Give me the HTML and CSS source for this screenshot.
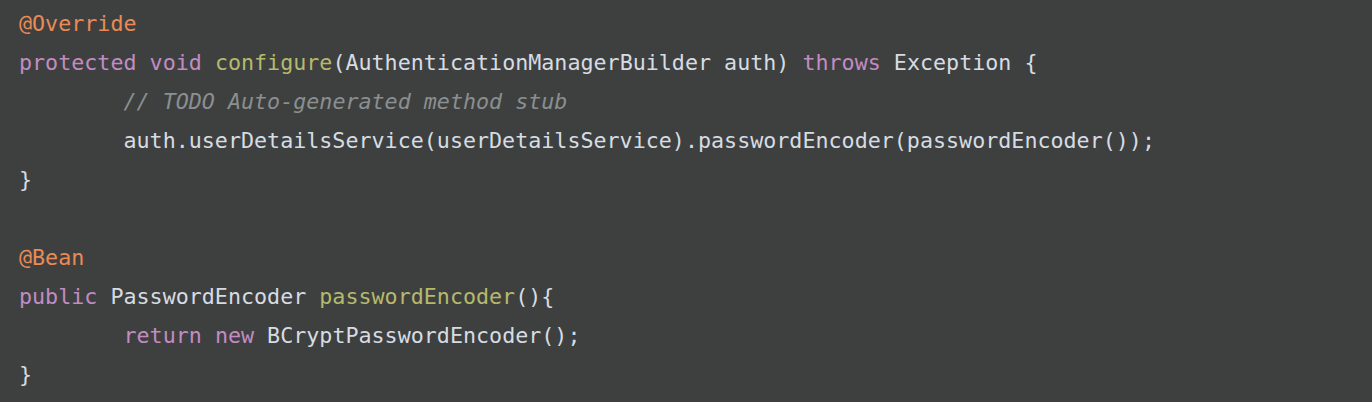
FILE: index.html
```html
<!DOCTYPE html>
<html>
<head>
<meta charset="utf-8">
<link rel="stylesheet" href="styles.css">
</head>
<body>
<pre class="code"><span class="an">@Override</span>
<span class="kw">protected</span> <span class="kw">void</span> <span class="fn">configure</span>(AuthenticationManagerBuilder auth) <span class="kw">throws</span> Exception {
        <span class="cm">// TODO Auto-generated method stub</span>
        auth.userDetailsService(userDetailsService).passwordEncoder(passwordEncoder());
}

<span class="an">@Bean</span>
<span class="kw">public</span> PasswordEncoder <span class="fn">passwordEncoder</span>(){
        <span class="kw">return</span> <span class="kw">new</span> BCryptPasswordEncoder();
}</pre>
</body>
</html>
```
FILE: styles.css
```css
html, body {
  margin: 0;
  padding: 0;
  background: #3e4040;
  height: 100%;
}
.code {
  margin: 0;
  padding: 3.5px 0 0 19px;
  font-family: "DejaVu Sans Mono", monospace;
  font-size: 21.7px;
  line-height: 39.1px;
  color: #d6dce2;
  tab-size: 8;
  white-space: pre;
}
.an { color: #ea8a55; }
.kw { color: #c28cc2; }
.fn { color: #b6b96b; }
.cm { color: #8b8f8f; font-style: italic; }
```
